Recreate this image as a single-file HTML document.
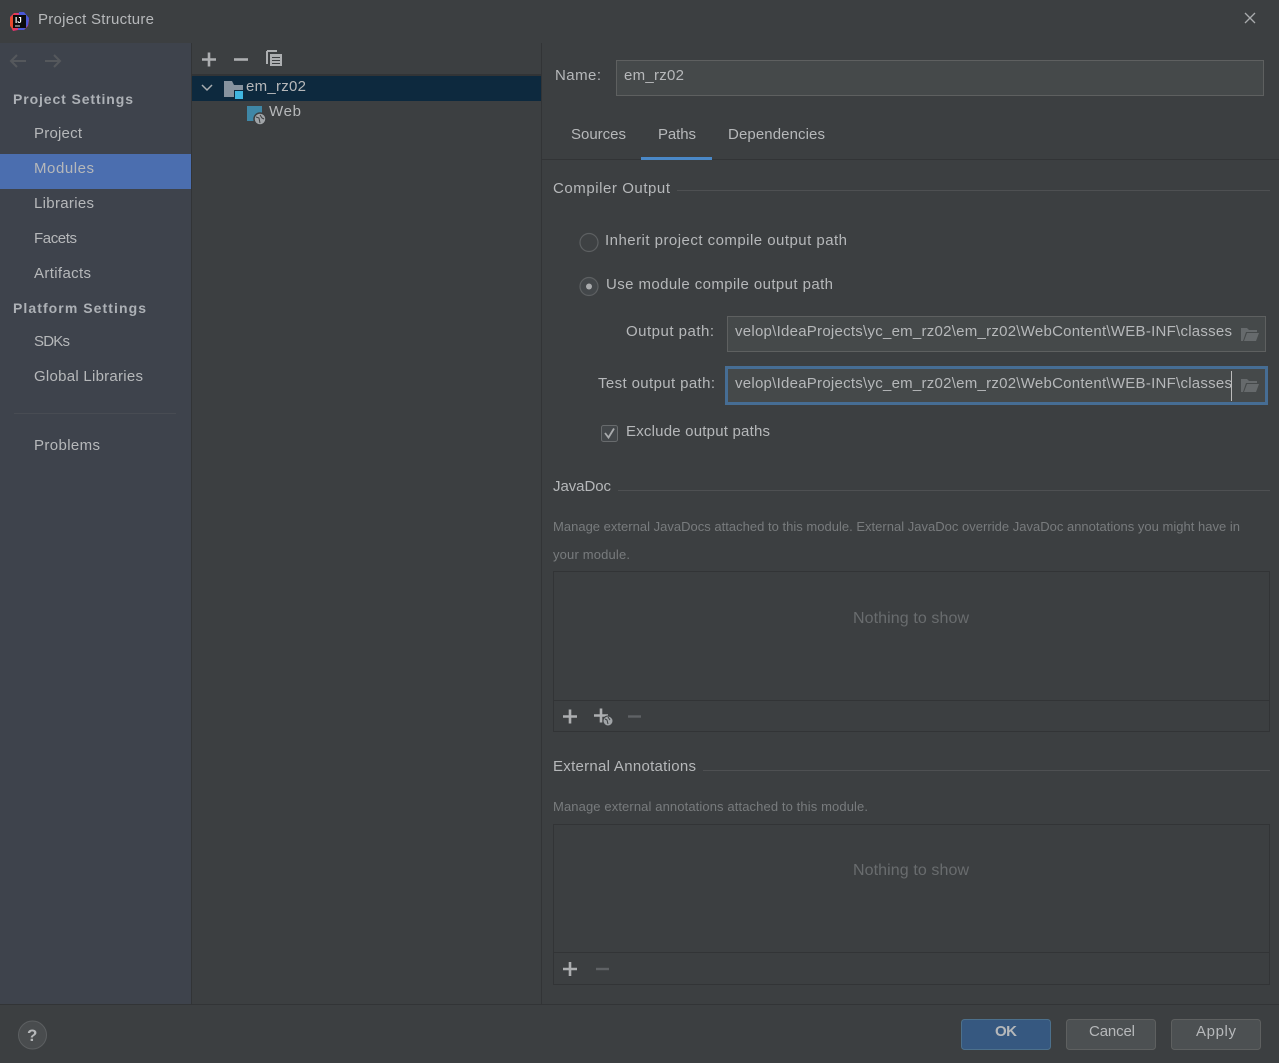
<!DOCTYPE html>
<html><head><meta charset="utf-8"><title>Project Structure</title>
<style>
html,body{margin:0;padding:0;width:1279px;height:1063px;overflow:hidden;background:#3c3f41}
svg{display:block;position:absolute;left:0;top:0}
text{font-family:"Liberation Sans",sans-serif;font-size:15px;fill:#b6b8ba;white-space:pre}
.b{font-weight:bold;font-size:14px;fill:#adb1b6}
.d{font-size:13px;fill:#787b7d}
.n{fill:#696c6e;font-size:16px}
.i{fill:none;stroke:#adafb1;stroke-width:2.600}
</style></head><body>
<svg width="1279" height="1063" viewBox="0 0 1279 1063">
<rect width="1279" height="1063" fill="#3c3f41"/>
<!-- title -->
<g>
<path d="M10 17l4-4h5l3-1 4 3 3 5-1 6-4 4h-6l-5 1-2-4z" fill="#e0336e"/>
<path d="M19 12l5 0 5 6-1 7-4 5-6 0z" fill="#4a58d6"/>
<path d="M10 18l5-5 2 6-3 11-4-4z" fill="#e84a2e"/>
<rect x="13" y="15" width="13" height="13" fill="#0b0b0c"/>
<text x="15" y="23" style="font-size:8px;font-weight:bold;fill:#fff">IJ</text>
<rect x="15" y="25.5" width="5" height="1" fill="#ddd"/>
</g>
<text x="38" y="24" textLength="116" lengthAdjust="spacing">Project Structure</text>
<path d="M1245 13l10 10M1255 13l-10 10" stroke="#a9abad" stroke-width="1.3" fill="none"/>
<!-- sidebar -->
<rect x="0" y="43" width="191" height="961" fill="#3e434c"/>
<rect x="191" y="43" width="1" height="961" fill="#323436"/>
<rect x="541" y="43" width="1" height="961" fill="#323436"/>
<path d="M11 61h15M17 55l-6 6 6 6M60 61H45M54 55l6 6-6 6" fill="none" stroke="#55585c" stroke-width="2"/>
<text class="b" x="13" y="104" textLength="120" lengthAdjust="spacing">Project Settings</text>
<text x="34" y="138" textLength="48" lengthAdjust="spacing">Project</text>
<rect x="0" y="154" width="191" height="35" fill="#4b6eaf"/>
<text x="34" y="173" textLength="60" lengthAdjust="spacing">Modules</text>
<text x="34" y="208" textLength="60" lengthAdjust="spacing">Libraries</text>
<text x="34" y="243" textLength="43" lengthAdjust="spacing">Facets</text>
<text x="34" y="278" textLength="57" lengthAdjust="spacing">Artifacts</text>
<text class="b" x="13" y="313" textLength="133" lengthAdjust="spacing">Platform Settings</text>
<text x="34" y="346" textLength="36" lengthAdjust="spacing">SDKs</text>
<text x="34" y="381" textLength="109" lengthAdjust="spacing">Global Libraries</text>
<rect x="14" y="413" width="162" height="1" fill="#484c53"/>
<text x="34" y="450" textLength="66" lengthAdjust="spacing">Problems</text>
<!-- tree toolbar -->
<path d="M202 59.500h14M209 52.500v14" class="i"/>
<path d="M234 59.500h14" class="i"/>
<path d="M267 51h10M267 51v13" fill="none" stroke="#adafb1" stroke-width="2"/>
<rect x="270" y="54" width="12" height="12" fill="#adafb1"/>
<path d="M272 57.500h8M272 60.500h8M272 63.500h8" stroke="#3c3f41"/>
<rect x="192" y="74" width="349" height="2" fill="#323436"/>
<rect x="192" y="76" width="349" height="25" fill="#0d293e"/>
<path d="M202 85l5 5 5-5" fill="none" stroke="#a9adb0" stroke-width="1.500"/>
<path d="M224 81h8l2 4h9v12h-19z" fill="#87939f"/>
<rect x="234" y="90" width="10" height="10" fill="#0d293e"/>
<rect x="235" y="91" width="8" height="8" fill="#40b6e0"/>
<text x="246" y="91" textLength="60" lengthAdjust="spacing">em_rz02</text>
<rect x="247" y="106" width="15" height="15" fill="#3f87a6"/>
<circle cx="260" cy="119" r="6" fill="#a0a4a7" stroke="#3c3f41" stroke-width="1.500"/>
<path d="M256 117l3 1 1 5M260 115l2 3 2 1" stroke="#3c3f41" stroke-width="1" fill="none"/>
<text x="269" y="116" textLength="32" lengthAdjust="spacing">Web</text>
<!-- name -->
<text x="555" y="80" textLength="46" lengthAdjust="spacing">Name:</text>
<rect x="616.500" y="60.500" width="647" height="35" fill="#45494a" stroke="#5e6060"/>
<text x="624" y="80" textLength="60" lengthAdjust="spacing">em_rz02</text>
<!-- tabs -->
<rect x="542" y="159" width="737" height="1" fill="#323436"/>
<text x="571" y="139" textLength="55" lengthAdjust="spacing">Sources</text>
<text x="658" y="139" textLength="38" lengthAdjust="spacing">Paths</text>
<text x="728" y="139" textLength="97" lengthAdjust="spacing">Dependencies</text>
<rect x="641" y="157" width="71" height="3" fill="#4a88c7"/>
<!-- compiler output -->
<text x="553" y="193" textLength="117" lengthAdjust="spacing">Compiler Output</text>
<rect x="677" y="190" width="593" height="1" fill="#4e5052"/>
<circle cx="589" cy="242.500" r="9" fill="#3e4143" stroke="#5d6062" stroke-width="1.200"/>
<text x="605" y="245" textLength="242" lengthAdjust="spacing">Inherit project compile output path</text>
<circle cx="589" cy="286.500" r="9" fill="#43474a" stroke="#5d6062" stroke-width="1.200"/>
<circle cx="589" cy="286.500" r="3" fill="#a9abad"/>
<text x="606" y="289" textLength="227" lengthAdjust="spacing">Use module compile output path</text>
<text x="626" y="336" textLength="88" lengthAdjust="spacing">Output path:</text>
<rect x="727.500" y="316.500" width="538" height="35" fill="#45494a" stroke="#5e6060"/>
<text x="735" y="336" textLength="497" lengthAdjust="spacing">velop\IdeaProjects\yc_em_rz02\em_rz02\WebContent\WEB-INF\classes</text>
<path d="M1241 341v-13h6l2 2h8v2h-11l-3 9zM1244 341l3-8h12l-3 8z" fill="#666a6c"/>
<text x="598" y="388" textLength="117" lengthAdjust="spacing">Test output path:</text>
<rect x="726.500" y="367.500" width="540" height="36" fill="#45494a" stroke="#466d94" stroke-width="3"/>
<text x="735" y="388" textLength="497" lengthAdjust="spacing">velop\IdeaProjects\yc_em_rz02\em_rz02\WebContent\WEB-INF\classes</text>
<rect x="1231" y="371" width="1" height="30" fill="#bbbbbb"/>
<path d="M1241 392v-13h6l2 2h8v2h-11l-3 9zM1244 392l3-8h12l-3 8z" fill="#666a6c"/>
<rect x="601.500" y="425.500" width="16" height="16" rx="2" fill="#43474a" stroke="#686b6d"/>
<path d="M605 433l3.500 4.500 5.500-9" fill="none" stroke="#a9abad" stroke-width="1.800"/>
<text x="626" y="436" textLength="144" lengthAdjust="spacing">Exclude output paths</text>
<!-- javadoc -->
<text x="553" y="491" textLength="58" lengthAdjust="spacing">JavaDoc</text>
<rect x="618" y="490" width="652" height="1" fill="#4e5052"/>
<text class="d" x="553" y="531" textLength="687" lengthAdjust="spacing">Manage external JavaDocs attached to this module. External JavaDoc override JavaDoc annotations you might have in</text>
<text class="d" x="553" y="559" textLength="77" lengthAdjust="spacing">your module.</text>
<rect x="553.500" y="571.500" width="716" height="160" fill="none" stroke="#323436"/>
<rect x="554" y="700" width="715" height="1" fill="#323436"/>
<text class="n" x="853" y="623" textLength="116" lengthAdjust="spacing">Nothing to show</text>
<path d="M563 716.500h14M570 709.500v14" class="i"/>
<path d="M594 715.500h14M601 708.500v14" class="i"/>
<circle cx="608" cy="721" r="5" fill="#a0a4a7" stroke="#3c3f41"/>
<path d="M605 719l2 1 1 4M608 717l2 3" stroke="#3c3f41" fill="none"/>
<path d="M628 716.500h13" fill="none" stroke="#5f6265" stroke-width="2.400"/>
<!-- annotations -->
<text x="553" y="771" textLength="143" lengthAdjust="spacing">External Annotations</text>
<rect x="703" y="770" width="567" height="1" fill="#4e5052"/>
<text class="d" x="553" y="811" textLength="315" lengthAdjust="spacing">Manage external annotations attached to this module.</text>
<rect x="553.500" y="824.500" width="716" height="160" fill="none" stroke="#323436"/>
<rect x="554" y="952" width="715" height="1" fill="#323436"/>
<text class="n" x="853" y="875" textLength="116" lengthAdjust="spacing">Nothing to show</text>
<path d="M563 969h14M570 962v14" class="i"/>
<path d="M596 969h13" fill="none" stroke="#5f6265" stroke-width="2.400"/>
<!-- footer -->
<rect x="0" y="1004" width="1279" height="1" fill="#323436"/>
<circle cx="32.500" cy="1035" r="14" fill="#494c4e" stroke="#5c5f61"/>
<text x="27" y="1041" style="font-size:17px;font-weight:bold;fill:#b6b8ba">?</text>
<rect x="961.500" y="1019.500" width="89" height="30" rx="3" fill="#365880" stroke="#4c708c"/>
<text x="995" y="1036" style="font-weight:bold" textLength="22" lengthAdjust="spacing">OK</text>
<rect x="1066.500" y="1019.500" width="89" height="30" rx="3" fill="#4c5052" stroke="#5e6060"/>
<text x="1089" y="1036" textLength="46" lengthAdjust="spacing">Cancel</text>
<rect x="1171.500" y="1019.500" width="89" height="30" rx="3" fill="#4c5052" stroke="#5e6060"/>
<text x="1196" y="1036" textLength="40" lengthAdjust="spacing">Apply</text>
</svg>
</body></html>
